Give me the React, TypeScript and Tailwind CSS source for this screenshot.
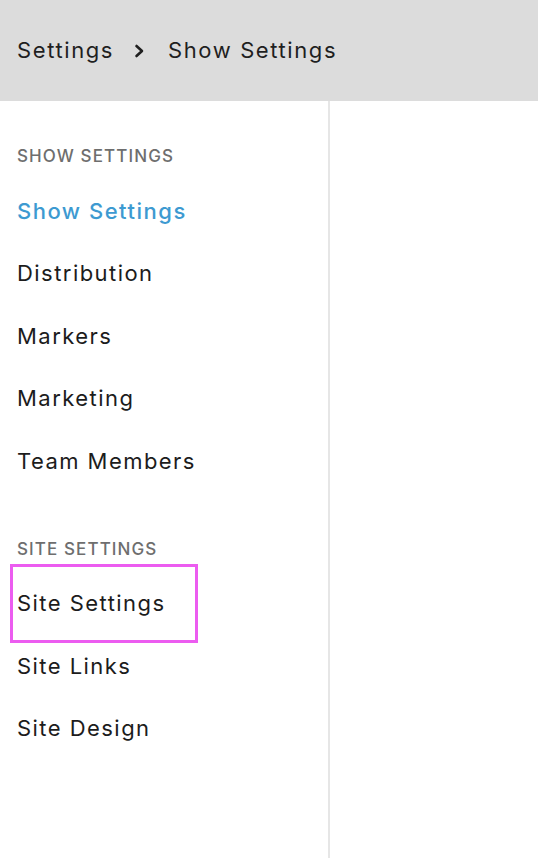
import React from "react";

function Item({ label, active, highlight }: { label: string; active?: boolean; highlight?: boolean }) {
  return (
    <div className="relative h-[62.5px] flex items-center pl-[17px]">
      <span
        className={
          active
            ? "text-[22px] font-medium text-[#3d9ad1] tracking-[1.5px]"
            : "text-[22px] text-[#1c1c1c] tracking-[1.45px]"
        }
      >
        {label}
      </span>
      {highlight && (
        <span className="absolute left-[10px] top-[-9px] w-[188px] h-[79px] border-[3px] border-[#ec5cf0] pointer-events-none" />
      )}
    </div>
  );
}

function SectionHeader({ label }: { label: string }) {
  return (
    <div className="h-[20px] flex items-center pl-[17px] mb-[13px] text-[17px] font-medium text-[#6e6e6e] tracking-[1.1px] uppercase">
      {label}
    </div>
  );
}

export default function App() {
  return (
    <div className="w-[538px] h-[858px] bg-white flex flex-col overflow-hidden" style={{ fontFamily: "Inter, 'Noto Sans', sans-serif" }}>
      <div className="h-[101px] shrink-0 bg-[#dcdcdc] flex items-center pl-[17px] text-[22px] text-[#1f1f1f] tracking-[1.6px]">
        <span>Settings</span>
        <svg className="ml-[19px] mr-[23px]" width="12" height="14" viewBox="0 0 12 14">
          <path d="M3.5 2 L9 7 L3.5 12" fill="none" stroke="#1f1f1f" strokeWidth="2.6" strokeLinecap="round" strokeLinejoin="round" />
        </svg>
        <span>Show Settings</span>
      </div>
      <div className="flex flex-1 min-h-0">
        <div className="w-[330px] shrink-0 border-r-2 border-[#e6e6e6] pt-[46px]">
          <SectionHeader label="Show Settings" />
          <Item label="Show Settings" active />
          <Item label="Distribution" />
          <Item label="Markers" />
          <Item label="Marketing" />
          <Item label="Team Members" />
          <div className="h-[47px]" />
          <SectionHeader label="Site Settings" />
          <Item label="Site Settings" highlight />
          <Item label="Site Links" />
          <Item label="Site Design" />
        </div>
        <div className="flex-1" />
      </div>
    </div>
  );
}
